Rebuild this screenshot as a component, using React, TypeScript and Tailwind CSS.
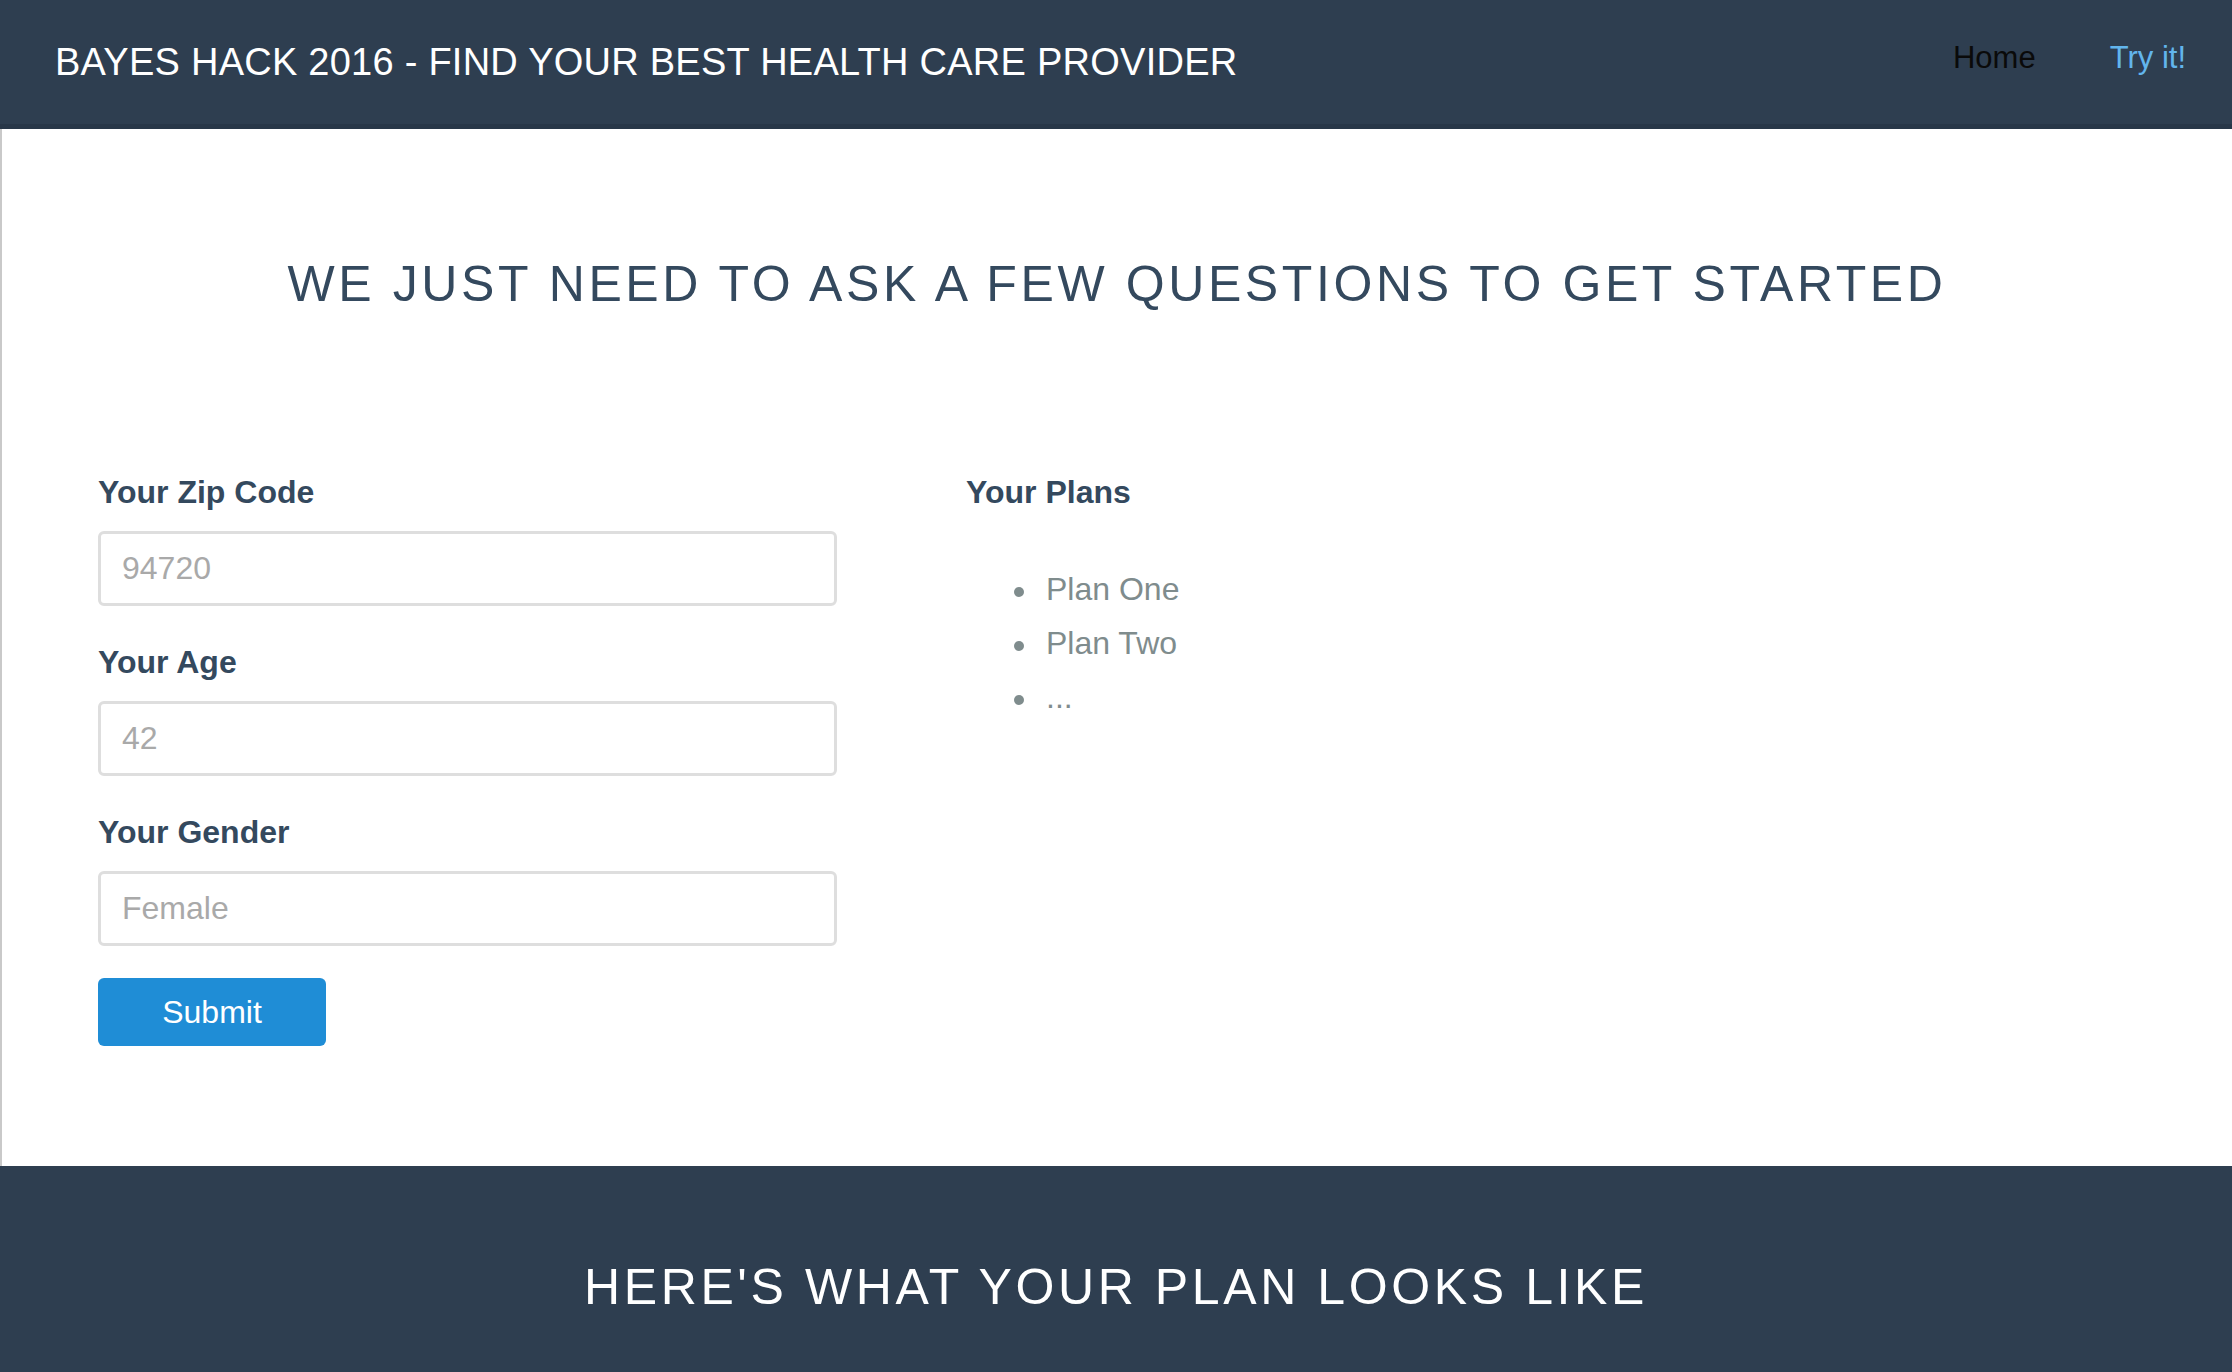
import React from 'react';

const fields = [
  { label: 'Your Zip Code', placeholder: '94720' },
  { label: 'Your Age', placeholder: '42' },
  { label: 'Your Gender', placeholder: 'Female' },
];

const plans = ['Plan One', 'Plan Two', '...'];

export default function App() {
  return (
    <div className="min-h-screen bg-white font-['Liberation_Sans',Arial,sans-serif]">
      <nav className="flex h-[129px] items-center justify-between border-b-[5px] border-[#283748] bg-[#2e3e50] pl-[55px] pr-[46px]">
        <span className="text-[38px] leading-none tracking-[0.25px] text-white">
          BAYES HACK 2016 - FIND YOUR BEST HEALTH CARE PROVIDER
        </span>
        <div className="mb-[10px] flex items-center gap-[74px] text-[31px] leading-none">
          <a href="#" className="text-[#0a0a0a]">Home</a>
          <a href="#" className="text-[#62b5ec]">Try it!</a>
        </div>
      </nav>

      <main className="border-l-2 border-[#c9c9c9] pb-[120px]">
        <h1 className="pt-[130px] text-center text-[50px] leading-none tracking-[3.6px] text-[#34495e]">
          WE JUST NEED TO ASK A FEW QUESTIONS TO GET STARTED
        </h1>

        <div className="mt-[167px] flex gap-[129px] pl-[96px]">
          <form className="flex w-[739px] flex-col" onSubmit={(e) => e.preventDefault()}>
            {fields.map((field, index) => (
              <div key={field.label} className={index > 0 ? 'mt-[40px]' : ''}>
                <label className="block text-[32px] font-bold leading-none text-[#34495e]">
                  {field.label}
                </label>
                <input
                  type="text"
                  placeholder={field.placeholder}
                  className="mt-[23px] block h-[75px] w-full rounded-[6px] border-[3px] border-[#dedede] px-[21px] text-[32px] text-[#555] outline-none placeholder:text-[#a9a9a9]"
                />
              </div>
            ))}
            <button
              type="submit"
              className="mt-[32px] h-[68px] w-[228px] rounded-[6px] bg-[#1f8dd6] text-[32px] leading-none text-white"
            >
              Submit
            </button>
          </form>

          <div>
            <h3 className="text-[32px] font-bold leading-none text-[#34495e]">Your Plans</h3>
            <ul className="mt-[54px] pl-[48px] text-[32px] leading-[54px] text-[#7f8c8d]">
              {plans.map((plan) => (
                <li key={plan} className="flex items-start gap-[22px]">
                  <span className="mt-[25px] h-[10px] w-[10px] shrink-0 rounded-full bg-[#7f8c8d]" />
                  <span>{plan}</span>
                </li>
              ))}
            </ul>
          </div>
        </div>
      </main>

      <footer className="bg-[#2e3e50] pb-[140px] pt-[96px]">
        <h2 className="text-center text-[50px] leading-none tracking-[3.6px] text-white">
          HERE'S WHAT YOUR PLAN LOOKS LIKE
        </h2>
      </footer>
    </div>
  );
}
